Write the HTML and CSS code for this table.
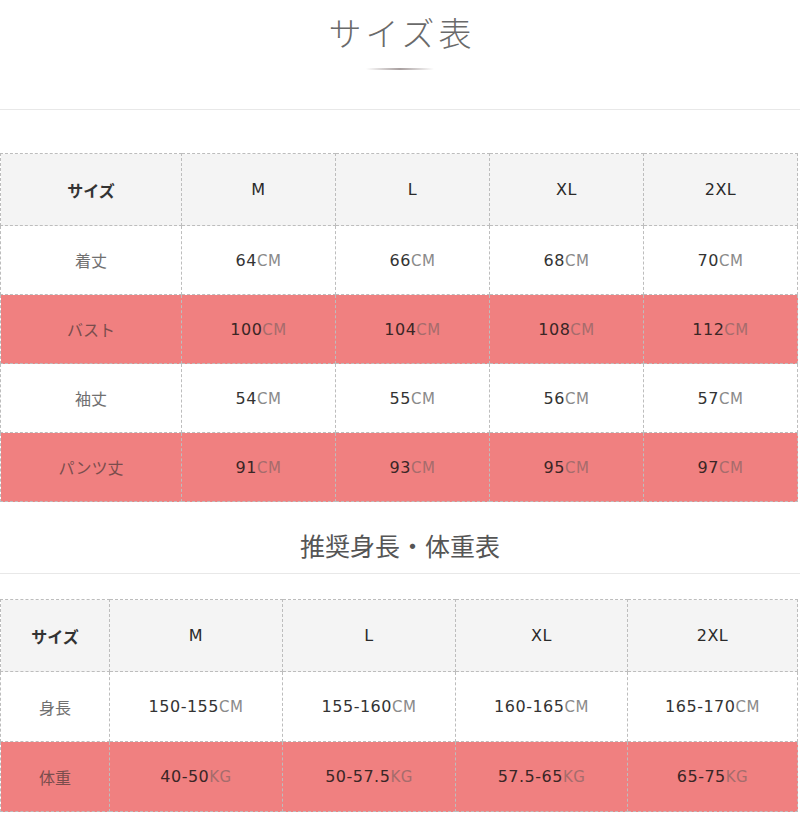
FILE: index.html
```html
<!DOCTYPE html>
<html lang="ja">
<head>
<meta charset="utf-8">
<link rel="stylesheet" href="styles.css">
</head>
<body>
<div class="page">
  <header class="head">
    <h1 class="title">サイズ表</h1>
    <div class="title-line"></div>
  </header>
  <div class="rule"></div>

  <table class="sz t1">
    <colgroup><col class="c1a"><col class="c1"><col class="c1"><col class="c1"><col class="c1"></colgroup>
    <tr class="hd"><th class="lab">サイズ</th><th>M</th><th>L</th><th>XL</th><th>2XL</th></tr>
    <tr><td class="lab">着丈</td><td>64<span class="u">CM</span></td><td>66<span class="u">CM</span></td><td>68<span class="u">CM</span></td><td>70<span class="u">CM</span></td></tr>
    <tr class="pk"><td class="lab">バスト</td><td>100<span class="u">CM</span></td><td>104<span class="u">CM</span></td><td>108<span class="u">CM</span></td><td>112<span class="u">CM</span></td></tr>
    <tr><td class="lab">袖丈</td><td>54<span class="u">CM</span></td><td>55<span class="u">CM</span></td><td>56<span class="u">CM</span></td><td>57<span class="u">CM</span></td></tr>
    <tr class="pk"><td class="lab">パンツ丈</td><td>91<span class="u">CM</span></td><td>93<span class="u">CM</span></td><td>95<span class="u">CM</span></td><td>97<span class="u">CM</span></td></tr>
  </table>

  <h2 class="sub">推奨身長・体重表</h2>
  <div class="rule rule2"></div>

  <table class="sz t2">
    <colgroup><col class="c2a"><col class="c2b"><col class="c2b"><col class="c2c"><col class="c2d"></colgroup>
    <tr class="hd"><th class="lab">サイズ</th><th>M</th><th>L</th><th>XL</th><th>2XL</th></tr>
    <tr><td class="lab">身長</td><td>150-155<span class="u">CM</span></td><td>155-160<span class="u">CM</span></td><td>160-165<span class="u">CM</span></td><td>165-170<span class="u">CM</span></td></tr>
    <tr class="pk"><td class="lab">体重</td><td>40-50<span class="u">KG</span></td><td>50-57.5<span class="u">KG</span></td><td>57.5-65<span class="u">KG</span></td><td>65-75<span class="u">KG</span></td></tr>
  </table>
</div>
</body>
</html>
```

FILE: styles.css
```css
* { box-sizing: border-box; }
html, body { margin: 0; padding: 0; background: #fff; }
body { font-family: "DejaVu Sans", "Noto Sans CJK JP", sans-serif; color: #333; }
.page { width: 800px; }
.head { display: flex; flex-direction: column; align-items: center; padding-top: 12px; }
.title {
  margin: 0;
  font-family: "Noto Sans CJK JP", sans-serif;
  font-weight: 300;
  font-size: 33px;
  line-height: 40px;
  letter-spacing: 4px;
  padding-left: 4px;
  color: #6a6a6a;
}
.title-line {
  margin-top: 16px;
  width: 68px;
  height: 2px;
  background: linear-gradient(to right, rgba(160,150,150,0), #a89f9f 50%, rgba(160,150,150,0));
}
.rule { height: 1px; background: #e8e8e8; margin-top: 39px; }
.sz {
  border-collapse: collapse;
  table-layout: fixed;
  width: 797px;
  text-align: center;
}
.t1 { margin-top: 43px; }
.c1a { width: 181px; }
.c1 { width: 154px; }
.c2a { width: 109px; }
.c2b { width: 173px; }
.c2c { width: 172px; }
.c2d { width: 170px; }
.sz th, .sz td {
  border: 1px dashed #bdbdbd;
  padding: 0;
  font-size: 16px;
  font-weight: normal;
  letter-spacing: 0.5px;
  color: #333;
}
.sz tr { height: 69px; }
.sz tr.hd { height: 72px; background: #f4f4f4; }
.t2 tr { height: 70px; }
.t2 tr.hd { height: 72px; }
.sz th { font-weight: normal; color: #2a2a2a; }
.sz .lab {
  font-family: "Noto Sans CJK JP", sans-serif;
  color: #707070;
  font-size: 16px;
  letter-spacing: 0;
}
.sz th.lab { font-weight: 700; color: #333; }
.u { color: #8a8a8a; font-size: 15px; letter-spacing: 0.5px; }
.pk { background: #f08080; }
.pk td { color: #3a2626; }
.pk td.lab { color: #7a4d4d; }
.pk .u { color: #a66c6c; }
.sub {
  margin: 26px 0 0;
  text-align: center;
  font-family: "Noto Sans CJK JP", sans-serif;
  font-weight: 400;
  font-size: 25px;
  line-height: 34px;
  color: #555;
}
.rule2 { margin-top: 11px; }
.t2 { margin-top: 25px; }
```
